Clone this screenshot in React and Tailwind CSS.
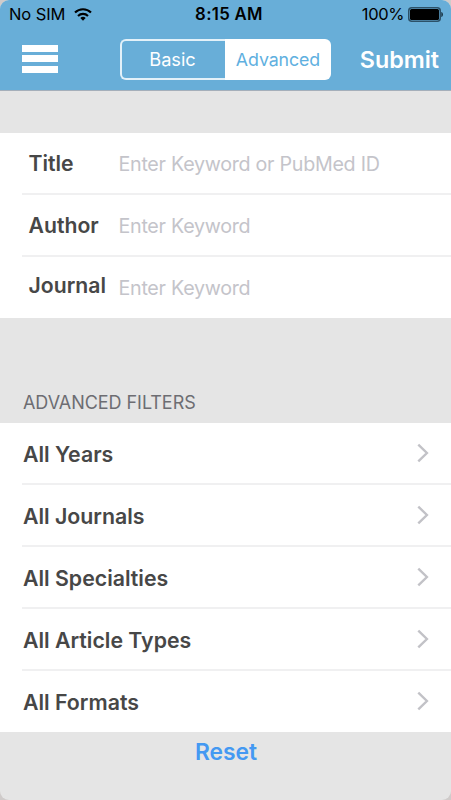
import React from "react";

const fields = [
  { label: "Title", placeholder: "Enter Keyword or PubMed ID", labelClass: "pt-[2px]", inputClass: "pt-[4px]" },
  { label: "Author", placeholder: "Enter Keyword", labelClass: "pt-[2px]", inputClass: "pt-[4px]" },
  { label: "Journal", placeholder: "Enter Keyword", labelClass: "pb-[3px]", inputClass: "pt-[3px]" },
];

const filters = ["All Years", "All Journals", "All Specialties", "All Article Types", "All Formats"];

function WifiIcon() {
  return (
    <svg width="18" height="13" viewBox="0 0 18 13" fill="none" stroke="#000" strokeWidth="2.1">
      <path d="M1 4.6a11.4 11.4 0 0 1 16 0" />
      <path d="M4 7.9a7.2 7.2 0 0 1 10 0" />
      <path d="M9 12.8 6.3 10a3.9 3.9 0 0 1 5.4 0z" fill="#000" stroke="none" />
    </svg>
  );
}

function BatteryIcon() {
  return (
    <svg width="36" height="15" viewBox="0 0 36 15">
      <rect x="0.75" y="0.75" width="31.5" height="13.5" rx="3" fill="none" stroke="#2c5168" strokeWidth="1.5" />
      <rect x="2" y="2" width="29" height="11" rx="1.5" fill="#000" />
      <path d="M33.3 5c2.2.6 2.2 4.4 0 5z" fill="#17303f" />
    </svg>
  );
}

function Chevron() {
  return (
    <svg width="12" height="20" viewBox="0 0 12 20" fill="none" stroke="#c2c2c7" strokeWidth="2.4">
      <path d="M1.3 1.6 9.9 10l-8.6 8.4" />
    </svg>
  );
}

function StatusBar() {
  return (
    <div className="grid h-[29px] grid-cols-3 items-center pl-[9px] pr-[7px] text-black">
      <div className="flex items-center gap-[9px] text-[16.5px]">
        <span className="tracking-[-0.1px]">No SIM</span>
        <WifiIcon />
      </div>
      <div className="pl-[5px] text-center text-[16.8px] font-semibold tracking-[0.3px]">8:15 AM</div>
      <div className="flex items-center justify-end gap-1 text-[16.5px]">
        <span className="tracking-[-0.4px]">100%</span>
        <BatteryIcon />
      </div>
    </div>
  );
}

function NavBar() {
  return (
    <div className="flex h-[61px] items-center pl-[22px] pr-3">
      <button className="mb-[2px] flex w-9 flex-col gap-[3.5px]">
        <span className="h-[7px] w-full bg-white" />
        <span className="h-[7px] w-full bg-white" />
        <span className="h-[7px] w-full bg-white" />
      </button>
      <div className="ml-[62px] flex h-[41px] w-[211px]">
        <div className="flex w-[105px] items-center justify-center rounded-l-[6px] border-2 border-r-0 border-[#e3f1f9] pr-[2px] text-[18.2px] text-white">
          Basic
        </div>
        <div className="flex flex-1 items-center justify-center rounded-r-[6px] bg-white pt-px text-[17.8px] tracking-[-0.1px] text-[#5fb0e0]">
          Advanced
        </div>
      </div>
      <button className="ml-auto pt-[2px] text-[23.3px] font-semibold text-white">Submit</button>
    </div>
  );
}

export default function App() {
  return (
    <div className="h-[800px] w-[451px] overflow-hidden bg-[#cfcbca] font-['Inter',sans-serif]">
      <div className="flex h-full flex-col overflow-hidden rounded-[9px] bg-[#e5e5e5]">
        <header className="h-[91px] shrink-0 border-b border-[#a5afba] bg-[#68aed8]">
          <StatusBar />
          <NavBar />
        </header>

        <section className="mt-[42px] bg-white">
          {fields.map((f) => (
            <div key={f.label} className="ml-[22px] flex h-[62px] items-center border-b-2 border-[#f0f0f1] last:h-[61px] last:border-b-0">
              <div className={`ml-[6.5px] w-[90px] text-[21.2px] font-semibold text-[#474747] ${f.labelClass}`}>{f.label}</div>
              <div className={`text-[19.7px] tracking-[-0.28px] text-[#c4c4ca] ${f.inputClass}`}>{f.placeholder}</div>
            </div>
          ))}
        </section>

        <div className="flex h-[105px] items-end px-[23px] pb-[7px] text-[18px] tracking-[-0.05px] text-[#6d6d72]">ADVANCED FILTERS</div>

        <section className="bg-white">
          {filters.map((name) => (
            <div key={name} className="ml-[22px] flex h-[62px] items-center justify-between border-b-2 border-[#f0f0f1] pl-px pr-[22px] last:h-[61px] last:border-b-0 last:pb-px">
              <span className="pt-[3px] text-[21.3px] font-semibold text-[#474747]">{name}</span>
              <Chevron />
            </div>
          ))}
        </section>

        <button className="mt-[3px] self-center pl-px text-[22.8px] font-semibold text-[#4499f2]">Reset</button>
      </div>
    </div>
  );
}
